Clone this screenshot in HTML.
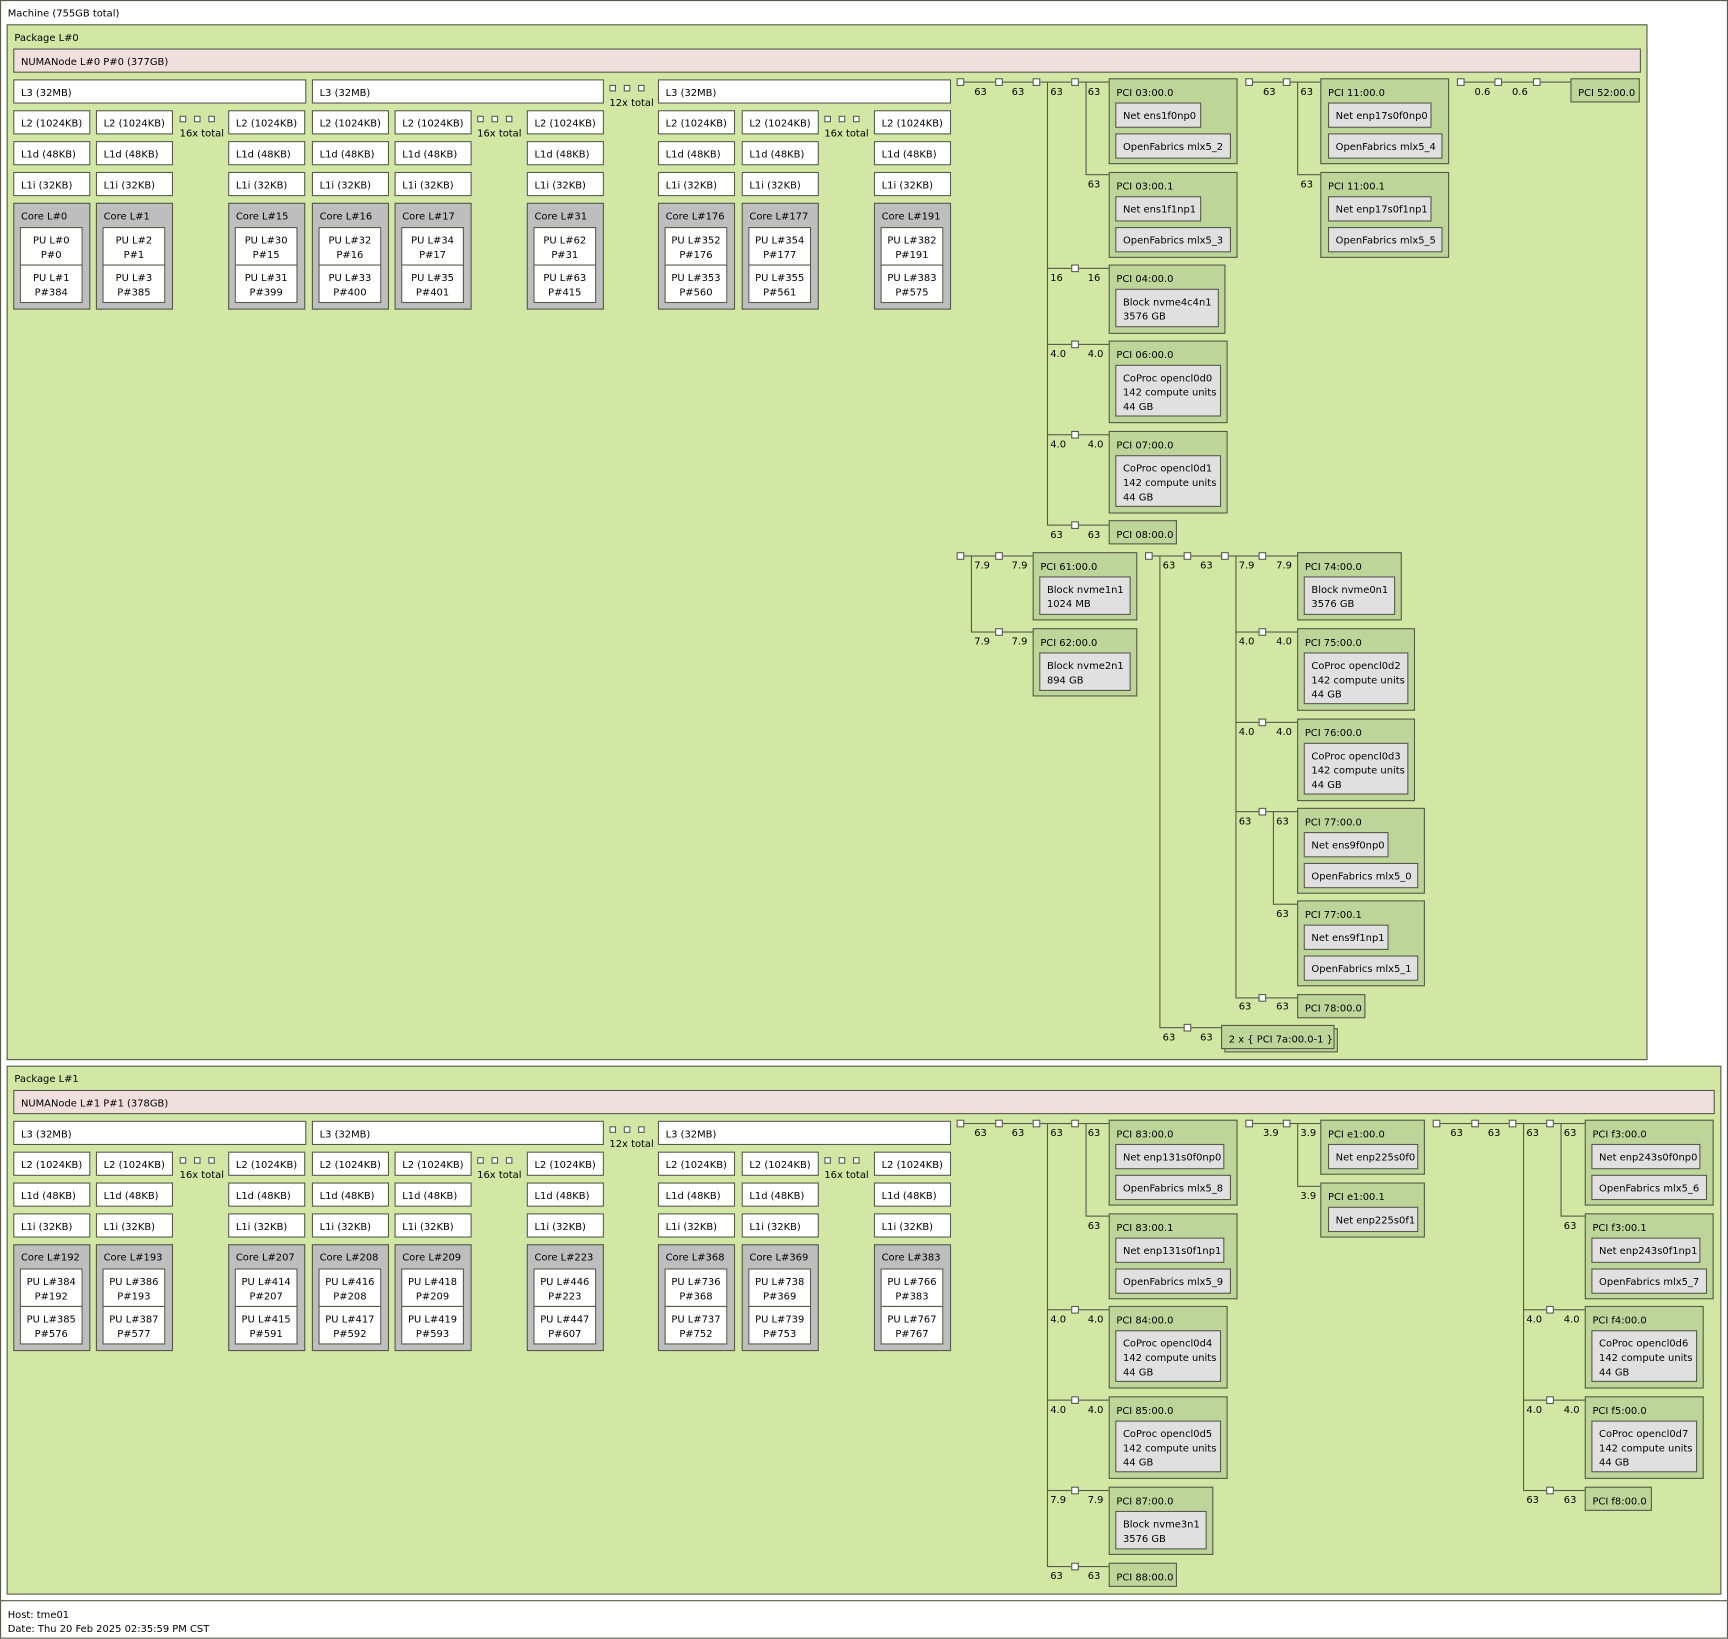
<!DOCTYPE html>
<html><head><meta charset="utf-8"><style>
html,body{margin:0;padding:0;background:#fff;width:1728px;height:1639px;overflow:hidden}
#r{position:absolute;left:0;top:0;width:1568px;height:1487px;transform:scale(1.10204);transform-origin:0 0;font-family:"DejaVu Sans","Liberation Sans",sans-serif;font-size:9px;line-height:13px;color:#000}
.b{position:absolute;box-sizing:border-box;border:1px solid #565a48;padding:6px 0 0 6px;white-space:pre}
.c{background:#fff}.k{background:#bebebe}.p{background:#fff;text-align:center;padding:6px 0 0 0}
.g{background:#bed59a;padding-top:7px}.o{background:#e0e0e0}
.h{position:absolute;height:1px;background:#565a48}.v{position:absolute;width:1px;background:#565a48}
.s{position:absolute;width:7px;height:7px;box-sizing:border-box;border:1px solid #565a48;background:#fff}
.d{position:absolute;width:6px;height:6px;box-sizing:border-box;border:1px solid #565a48;background:#fff}
.t{position:absolute;white-space:pre;margin-top:2px}
</style></head><body><div id="r">
<div class="b c" style="left:0;top:0;width:1568px;height:1453px;padding:6px 0 0 6px">Machine (755GB total)</div>
<div class="b c" style="left:0;top:1452px;width:1568px;height:35px;padding:7px 0 0 6px">Host: tme01
Date: Thu 20 Feb 2025 02:35:59 PM CST</div>

<!-- Package 0 -->
<div class="b" style="left:6px;top:22px;width:1489px;height:940px;background:#d2e7a4;padding-top:6px">Package L#0</div>
<div class="b" style="left:12px;top:44px;width:1477px;height:22px;background:#efdfde">NUMANode L#0 P#0 (377GB)</div>
<div class="b c" style="left:12px;top:72px;width:266px;height:22px">L3 (32MB)</div>
<div class="b c" style="left:283px;top:72px;width:265px;height:22px">L3 (32MB)</div>
<div class="b c" style="left:597px;top:72px;width:266px;height:22px">L3 (32MB)</div>
<div class="d" style="left:553px;top:77px"></div><div class="d" style="left:566px;top:77px"></div><div class="d" style="left:579px;top:77px"></div><div class="t" style="left:553px;top:86px">12x total</div>
<div class="d" style="left:163px;top:105px"></div><div class="d" style="left:176px;top:105px"></div><div class="d" style="left:189px;top:105px"></div><div class="t" style="left:163px;top:114px">16x total</div>
<div class="d" style="left:433px;top:105px"></div><div class="d" style="left:446px;top:105px"></div><div class="d" style="left:459px;top:105px"></div><div class="t" style="left:433px;top:114px">16x total</div>
<div class="d" style="left:748px;top:105px"></div><div class="d" style="left:761px;top:105px"></div><div class="d" style="left:774px;top:105px"></div><div class="t" style="left:748px;top:114px">16x total</div>

<div class="b c" style="left:12px;top:100px;width:70px;height:22px">L2 (1024KB)</div><div class="b c" style="left:12px;top:128px;width:70px;height:22px">L1d (48KB)</div><div class="b c" style="left:12px;top:156px;width:70px;height:22px">L1i (32KB)</div>
<div class="b k" style="left:12px;top:184px;width:70px;height:97px">Core L#0</div><div class="b p" style="left:18px;top:206px;width:57px;height:35px">PU L#0
P#0</div><div class="b p" style="left:18px;top:240px;width:57px;height:35px">PU L#1
P#384</div>
<div class="b c" style="left:87px;top:100px;width:70px;height:22px">L2 (1024KB)</div><div class="b c" style="left:87px;top:128px;width:70px;height:22px">L1d (48KB)</div><div class="b c" style="left:87px;top:156px;width:70px;height:22px">L1i (32KB)</div>
<div class="b k" style="left:87px;top:184px;width:70px;height:97px">Core L#1</div><div class="b p" style="left:93px;top:206px;width:57px;height:35px">PU L#2
P#1</div><div class="b p" style="left:93px;top:240px;width:57px;height:35px">PU L#3
P#385</div>
<div class="b c" style="left:207px;top:100px;width:70px;height:22px">L2 (1024KB)</div><div class="b c" style="left:207px;top:128px;width:70px;height:22px">L1d (48KB)</div><div class="b c" style="left:207px;top:156px;width:70px;height:22px">L1i (32KB)</div>
<div class="b k" style="left:207px;top:184px;width:70px;height:97px">Core L#15</div><div class="b p" style="left:213px;top:206px;width:57px;height:35px">PU L#30
P#15</div><div class="b p" style="left:213px;top:240px;width:57px;height:35px">PU L#31
P#399</div>
<div class="b c" style="left:283px;top:100px;width:70px;height:22px">L2 (1024KB)</div><div class="b c" style="left:283px;top:128px;width:70px;height:22px">L1d (48KB)</div><div class="b c" style="left:283px;top:156px;width:70px;height:22px">L1i (32KB)</div>
<div class="b k" style="left:283px;top:184px;width:70px;height:97px">Core L#16</div><div class="b p" style="left:289px;top:206px;width:57px;height:35px">PU L#32
P#16</div><div class="b p" style="left:289px;top:240px;width:57px;height:35px">PU L#33
P#400</div>
<div class="b c" style="left:358px;top:100px;width:70px;height:22px">L2 (1024KB)</div><div class="b c" style="left:358px;top:128px;width:70px;height:22px">L1d (48KB)</div><div class="b c" style="left:358px;top:156px;width:70px;height:22px">L1i (32KB)</div>
<div class="b k" style="left:358px;top:184px;width:70px;height:97px">Core L#17</div><div class="b p" style="left:364px;top:206px;width:57px;height:35px">PU L#34
P#17</div><div class="b p" style="left:364px;top:240px;width:57px;height:35px">PU L#35
P#401</div>
<div class="b c" style="left:478px;top:100px;width:70px;height:22px">L2 (1024KB)</div><div class="b c" style="left:478px;top:128px;width:70px;height:22px">L1d (48KB)</div><div class="b c" style="left:478px;top:156px;width:70px;height:22px">L1i (32KB)</div>
<div class="b k" style="left:478px;top:184px;width:70px;height:97px">Core L#31</div><div class="b p" style="left:484px;top:206px;width:57px;height:35px">PU L#62
P#31</div><div class="b p" style="left:484px;top:240px;width:57px;height:35px">PU L#63
P#415</div>
<div class="b c" style="left:597px;top:100px;width:70px;height:22px">L2 (1024KB)</div><div class="b c" style="left:597px;top:128px;width:70px;height:22px">L1d (48KB)</div><div class="b c" style="left:597px;top:156px;width:70px;height:22px">L1i (32KB)</div>
<div class="b k" style="left:597px;top:184px;width:70px;height:97px">Core L#176</div><div class="b p" style="left:603px;top:206px;width:57px;height:35px">PU L#352
P#176</div><div class="b p" style="left:603px;top:240px;width:57px;height:35px">PU L#353
P#560</div>
<div class="b c" style="left:673px;top:100px;width:70px;height:22px">L2 (1024KB)</div><div class="b c" style="left:673px;top:128px;width:70px;height:22px">L1d (48KB)</div><div class="b c" style="left:673px;top:156px;width:70px;height:22px">L1i (32KB)</div>
<div class="b k" style="left:673px;top:184px;width:70px;height:97px">Core L#177</div><div class="b p" style="left:679px;top:206px;width:57px;height:35px">PU L#354
P#177</div><div class="b p" style="left:679px;top:240px;width:57px;height:35px">PU L#355
P#561</div>
<div class="b c" style="left:793px;top:100px;width:70px;height:22px">L2 (1024KB)</div><div class="b c" style="left:793px;top:128px;width:70px;height:22px">L1d (48KB)</div><div class="b c" style="left:793px;top:156px;width:70px;height:22px">L1i (32KB)</div>
<div class="b k" style="left:793px;top:184px;width:70px;height:97px">Core L#191</div><div class="b p" style="left:799px;top:206px;width:57px;height:35px">PU L#382
P#191</div><div class="b p" style="left:799px;top:240px;width:57px;height:35px">PU L#383
P#575</div>

<!-- pkg0 tree 1 -->
<div class="h" style="left:871px;top:74px;width:135px"></div>
<div class="v" style="left:950px;top:74px;height:402px"></div>
<div class="v" style="left:985px;top:74px;height:84px"></div>
<div class="h" style="left:985px;top:158px;width:21px"></div>
<div class="h" style="left:950px;top:243px;width:56px"></div>
<div class="h" style="left:950px;top:312px;width:56px"></div>
<div class="h" style="left:950px;top:394px;width:56px"></div>
<div class="h" style="left:950px;top:476px;width:56px"></div>
<div class="s" style="left:868px;top:71px"></div><div class="s" style="left:903px;top:71px"></div><div class="s" style="left:937px;top:71px"></div><div class="s" style="left:972px;top:71px"></div>
<div class="s" style="left:972px;top:240px"></div><div class="s" style="left:972px;top:309px"></div><div class="s" style="left:972px;top:391px"></div><div class="s" style="left:972px;top:473px"></div>
<div class="t" style="left:884px;top:76px">63</div><div class="t" style="left:918px;top:76px">63</div><div class="t" style="left:953px;top:76px">63</div><div class="t" style="left:987px;top:76px">63</div><div class="t" style="left:987px;top:160px">63</div>
<div class="t" style="left:953px;top:245px">16</div><div class="t" style="left:987px;top:245px">16</div>
<div class="t" style="left:953px;top:314px">4.0</div><div class="t" style="left:987px;top:314px">4.0</div>
<div class="t" style="left:953px;top:396px">4.0</div><div class="t" style="left:987px;top:396px">4.0</div>
<div class="t" style="left:953px;top:478px">63</div><div class="t" style="left:987px;top:478px">63</div>
<div class="b g" style="left:1006px;top:71px;width:117px;height:78px">PCI 03:00.0</div>
<div class="b o" style="left:1012px;top:93px;width:78px;height:23px">Net ens1f0np0</div>
<div class="b o" style="left:1012px;top:121px;width:105px;height:23px">OpenFabrics mlx5_2</div>
<div class="b g" style="left:1006px;top:156px;width:117px;height:78px">PCI 03:00.1</div>
<div class="b o" style="left:1012px;top:178px;width:78px;height:23px">Net ens1f1np1</div>
<div class="b o" style="left:1012px;top:206px;width:105px;height:23px">OpenFabrics mlx5_3</div>
<div class="b g" style="left:1006px;top:240px;width:106px;height:63px">PCI 04:00.0</div>
<div class="b o" style="left:1012px;top:262px;width:94px;height:35px">Block nvme4c4n1
3576 GB</div>
<div class="b g" style="left:1006px;top:309px;width:108px;height:75px">PCI 06:00.0</div>
<div class="b o" style="left:1012px;top:331px;width:96px;height:47px">CoProc opencl0d0
142 compute units
44 GB</div>
<div class="b g" style="left:1006px;top:391px;width:108px;height:75px">PCI 07:00.0</div>
<div class="b o" style="left:1012px;top:413px;width:96px;height:47px">CoProc opencl0d1
142 compute units
44 GB</div>
<div class="b g" style="left:1006px;top:472px;width:62px;height:22px">PCI 08:00.0</div>

<!-- pkg0 tree 2 -->
<div class="h" style="left:1133px;top:74px;width:65px"></div>
<div class="v" style="left:1177px;top:74px;height:84px"></div>
<div class="h" style="left:1177px;top:158px;width:21px"></div>
<div class="s" style="left:1130px;top:71px"></div><div class="s" style="left:1164px;top:71px"></div>
<div class="t" style="left:1146px;top:76px">63</div><div class="t" style="left:1180px;top:76px">63</div><div class="t" style="left:1180px;top:160px">63</div>
<div class="b g" style="left:1198px;top:71px;width:117px;height:78px">PCI 11:00.0</div>
<div class="b o" style="left:1205px;top:93px;width:94px;height:23px">Net enp17s0f0np0</div>
<div class="b o" style="left:1205px;top:121px;width:104px;height:23px">OpenFabrics mlx5_4</div>
<div class="b g" style="left:1198px;top:156px;width:117px;height:78px">PCI 11:00.1</div>
<div class="b o" style="left:1205px;top:178px;width:94px;height:23px">Net enp17s0f1np1</div>
<div class="b o" style="left:1205px;top:206px;width:104px;height:23px">OpenFabrics mlx5_5</div>

<!-- pkg0 tree 3 -->
<div class="h" style="left:1325px;top:74px;width:100px"></div>
<div class="s" style="left:1322px;top:71px"></div><div class="s" style="left:1356px;top:71px"></div><div class="s" style="left:1391px;top:71px"></div>
<div class="t" style="left:1338px;top:76px">0.6</div><div class="t" style="left:1372px;top:76px">0.6</div>
<div class="b g" style="left:1425px;top:71px;width:63px;height:22px">PCI 52:00.0</div>

<!-- pkg0 tree 4 -->
<div class="h" style="left:871px;top:504px;width:66px"></div>
<div class="v" style="left:881px;top:504px;height:69px"></div>
<div class="h" style="left:881px;top:573px;width:56px"></div>
<div class="s" style="left:868px;top:501px"></div><div class="s" style="left:903px;top:501px"></div><div class="s" style="left:903px;top:570px"></div>
<div class="t" style="left:884px;top:506px">7.9</div><div class="t" style="left:918px;top:506px">7.9</div><div class="t" style="left:884px;top:575px">7.9</div><div class="t" style="left:918px;top:575px">7.9</div>
<div class="b g" style="left:937px;top:501px;width:95px;height:62px">PCI 61:00.0</div>
<div class="b o" style="left:943px;top:523px;width:83px;height:35px">Block nvme1n1
1024 MB</div>
<div class="b g" style="left:937px;top:570px;width:95px;height:62px">PCI 62:00.0</div>
<div class="b o" style="left:943px;top:592px;width:83px;height:35px">Block nvme2n1
894 GB</div>

<!-- pkg0 tree 5 -->
<div class="h" style="left:1042px;top:504px;width:135px"></div>
<div class="v" style="left:1052px;top:504px;height:428px"></div>
<div class="v" style="left:1121px;top:504px;height:401px"></div>
<div class="h" style="left:1121px;top:573px;width:56px"></div>
<div class="h" style="left:1121px;top:655px;width:56px"></div>
<div class="h" style="left:1121px;top:736px;width:56px"></div>
<div class="v" style="left:1155px;top:736px;height:84px"></div>
<div class="h" style="left:1155px;top:820px;width:22px"></div>
<div class="h" style="left:1121px;top:905px;width:56px"></div>
<div class="h" style="left:1052px;top:932px;width:56px"></div>
<div class="s" style="left:1039px;top:501px"></div><div class="s" style="left:1074px;top:501px"></div><div class="s" style="left:1108px;top:501px"></div><div class="s" style="left:1142px;top:501px"></div>
<div class="s" style="left:1142px;top:570px"></div><div class="s" style="left:1142px;top:652px"></div><div class="s" style="left:1142px;top:733px"></div><div class="s" style="left:1142px;top:902px"></div><div class="s" style="left:1074px;top:929px"></div>
<div class="t" style="left:1055px;top:506px">63</div><div class="t" style="left:1089px;top:506px">63</div><div class="t" style="left:1124px;top:506px">7.9</div><div class="t" style="left:1158px;top:506px">7.9</div>
<div class="t" style="left:1124px;top:575px">4.0</div><div class="t" style="left:1158px;top:575px">4.0</div>
<div class="t" style="left:1124px;top:657px">4.0</div><div class="t" style="left:1158px;top:657px">4.0</div>
<div class="t" style="left:1124px;top:738px">63</div><div class="t" style="left:1158px;top:738px">63</div><div class="t" style="left:1158px;top:822px">63</div>
<div class="t" style="left:1124px;top:906px">63</div><div class="t" style="left:1158px;top:906px">63</div>
<div class="t" style="left:1055px;top:934px">63</div><div class="t" style="left:1089px;top:934px">63</div>
<div class="b g" style="left:1177px;top:501px;width:95px;height:62px">PCI 74:00.0</div>
<div class="b o" style="left:1183px;top:523px;width:83px;height:35px">Block nvme0n1
3576 GB</div>
<div class="b g" style="left:1177px;top:570px;width:107px;height:75px">PCI 75:00.0</div>
<div class="b o" style="left:1183px;top:592px;width:95px;height:47px">CoProc opencl0d2
142 compute units
44 GB</div>
<div class="b g" style="left:1177px;top:652px;width:107px;height:75px">PCI 76:00.0</div>
<div class="b o" style="left:1183px;top:674px;width:95px;height:47px">CoProc opencl0d3
142 compute units
44 GB</div>
<div class="b g" style="left:1177px;top:733px;width:116px;height:78px">PCI 77:00.0</div>
<div class="b o" style="left:1183px;top:755px;width:77px;height:23px">Net ens9f0np0</div>
<div class="b o" style="left:1183px;top:783px;width:104px;height:23px">OpenFabrics mlx5_0</div>
<div class="b g" style="left:1177px;top:817px;width:116px;height:78px">PCI 77:00.1</div>
<div class="b o" style="left:1183px;top:839px;width:77px;height:23px">Net ens9f1np1</div>
<div class="b o" style="left:1183px;top:867px;width:104px;height:23px">OpenFabrics mlx5_1</div>
<div class="b g" style="left:1177px;top:902px;width:62px;height:22px">PCI 78:00.0</div>
<div class="b g" style="left:1111px;top:933px;width:103px;height:22px"></div>
<div class="b g" style="left:1108px;top:930px;width:103px;height:22px">2 x { PCI 7a:00.0-1 }</div>

<!-- Package 1 -->
<div class="b" style="left:6px;top:967px;width:1556px;height:480px;background:#d2e7a4;padding-top:6px">Package L#1</div>
<div class="b" style="left:12px;top:989px;width:1544px;height:22px;background:#efdfde">NUMANode L#1 P#1 (378GB)</div>
<div class="b c" style="left:12px;top:1017px;width:266px;height:22px">L3 (32MB)</div>
<div class="b c" style="left:283px;top:1017px;width:265px;height:22px">L3 (32MB)</div>
<div class="b c" style="left:597px;top:1017px;width:266px;height:22px">L3 (32MB)</div>
<div class="d" style="left:553px;top:1022px"></div><div class="d" style="left:566px;top:1022px"></div><div class="d" style="left:579px;top:1022px"></div><div class="t" style="left:553px;top:1031px">12x total</div>
<div class="d" style="left:163px;top:1050px"></div><div class="d" style="left:176px;top:1050px"></div><div class="d" style="left:189px;top:1050px"></div><div class="t" style="left:163px;top:1059px">16x total</div>
<div class="d" style="left:433px;top:1050px"></div><div class="d" style="left:446px;top:1050px"></div><div class="d" style="left:459px;top:1050px"></div><div class="t" style="left:433px;top:1059px">16x total</div>
<div class="d" style="left:748px;top:1050px"></div><div class="d" style="left:761px;top:1050px"></div><div class="d" style="left:774px;top:1050px"></div><div class="t" style="left:748px;top:1059px">16x total</div>

<div class="b c" style="left:12px;top:1045px;width:70px;height:22px">L2 (1024KB)</div><div class="b c" style="left:12px;top:1073px;width:70px;height:22px">L1d (48KB)</div><div class="b c" style="left:12px;top:1101px;width:70px;height:22px">L1i (32KB)</div>
<div class="b k" style="left:12px;top:1129px;width:70px;height:97px">Core L#192</div><div class="b p" style="left:18px;top:1151px;width:57px;height:35px">PU L#384
P#192</div><div class="b p" style="left:18px;top:1185px;width:57px;height:35px">PU L#385
P#576</div>
<div class="b c" style="left:87px;top:1045px;width:70px;height:22px">L2 (1024KB)</div><div class="b c" style="left:87px;top:1073px;width:70px;height:22px">L1d (48KB)</div><div class="b c" style="left:87px;top:1101px;width:70px;height:22px">L1i (32KB)</div>
<div class="b k" style="left:87px;top:1129px;width:70px;height:97px">Core L#193</div><div class="b p" style="left:93px;top:1151px;width:57px;height:35px">PU L#386
P#193</div><div class="b p" style="left:93px;top:1185px;width:57px;height:35px">PU L#387
P#577</div>
<div class="b c" style="left:207px;top:1045px;width:70px;height:22px">L2 (1024KB)</div><div class="b c" style="left:207px;top:1073px;width:70px;height:22px">L1d (48KB)</div><div class="b c" style="left:207px;top:1101px;width:70px;height:22px">L1i (32KB)</div>
<div class="b k" style="left:207px;top:1129px;width:70px;height:97px">Core L#207</div><div class="b p" style="left:213px;top:1151px;width:57px;height:35px">PU L#414
P#207</div><div class="b p" style="left:213px;top:1185px;width:57px;height:35px">PU L#415
P#591</div>
<div class="b c" style="left:283px;top:1045px;width:70px;height:22px">L2 (1024KB)</div><div class="b c" style="left:283px;top:1073px;width:70px;height:22px">L1d (48KB)</div><div class="b c" style="left:283px;top:1101px;width:70px;height:22px">L1i (32KB)</div>
<div class="b k" style="left:283px;top:1129px;width:70px;height:97px">Core L#208</div><div class="b p" style="left:289px;top:1151px;width:57px;height:35px">PU L#416
P#208</div><div class="b p" style="left:289px;top:1185px;width:57px;height:35px">PU L#417
P#592</div>
<div class="b c" style="left:358px;top:1045px;width:70px;height:22px">L2 (1024KB)</div><div class="b c" style="left:358px;top:1073px;width:70px;height:22px">L1d (48KB)</div><div class="b c" style="left:358px;top:1101px;width:70px;height:22px">L1i (32KB)</div>
<div class="b k" style="left:358px;top:1129px;width:70px;height:97px">Core L#209</div><div class="b p" style="left:364px;top:1151px;width:57px;height:35px">PU L#418
P#209</div><div class="b p" style="left:364px;top:1185px;width:57px;height:35px">PU L#419
P#593</div>
<div class="b c" style="left:478px;top:1045px;width:70px;height:22px">L2 (1024KB)</div><div class="b c" style="left:478px;top:1073px;width:70px;height:22px">L1d (48KB)</div><div class="b c" style="left:478px;top:1101px;width:70px;height:22px">L1i (32KB)</div>
<div class="b k" style="left:478px;top:1129px;width:70px;height:97px">Core L#223</div><div class="b p" style="left:484px;top:1151px;width:57px;height:35px">PU L#446
P#223</div><div class="b p" style="left:484px;top:1185px;width:57px;height:35px">PU L#447
P#607</div>
<div class="b c" style="left:597px;top:1045px;width:70px;height:22px">L2 (1024KB)</div><div class="b c" style="left:597px;top:1073px;width:70px;height:22px">L1d (48KB)</div><div class="b c" style="left:597px;top:1101px;width:70px;height:22px">L1i (32KB)</div>
<div class="b k" style="left:597px;top:1129px;width:70px;height:97px">Core L#368</div><div class="b p" style="left:603px;top:1151px;width:57px;height:35px">PU L#736
P#368</div><div class="b p" style="left:603px;top:1185px;width:57px;height:35px">PU L#737
P#752</div>
<div class="b c" style="left:673px;top:1045px;width:70px;height:22px">L2 (1024KB)</div><div class="b c" style="left:673px;top:1073px;width:70px;height:22px">L1d (48KB)</div><div class="b c" style="left:673px;top:1101px;width:70px;height:22px">L1i (32KB)</div>
<div class="b k" style="left:673px;top:1129px;width:70px;height:97px">Core L#369</div><div class="b p" style="left:679px;top:1151px;width:57px;height:35px">PU L#738
P#369</div><div class="b p" style="left:679px;top:1185px;width:57px;height:35px">PU L#739
P#753</div>
<div class="b c" style="left:793px;top:1045px;width:70px;height:22px">L2 (1024KB)</div><div class="b c" style="left:793px;top:1073px;width:70px;height:22px">L1d (48KB)</div><div class="b c" style="left:793px;top:1101px;width:70px;height:22px">L1i (32KB)</div>
<div class="b k" style="left:793px;top:1129px;width:70px;height:97px">Core L#383</div><div class="b p" style="left:799px;top:1151px;width:57px;height:35px">PU L#766
P#383</div><div class="b p" style="left:799px;top:1185px;width:57px;height:35px">PU L#767
P#767</div>

<!-- pkg1 tree 1 -->
<div class="h" style="left:871px;top:1019px;width:135px"></div>
<div class="v" style="left:950px;top:1019px;height:402px"></div>
<div class="v" style="left:985px;top:1019px;height:84px"></div>
<div class="h" style="left:985px;top:1103px;width:21px"></div>
<div class="h" style="left:950px;top:1188px;width:56px"></div>
<div class="h" style="left:950px;top:1270px;width:56px"></div>
<div class="h" style="left:950px;top:1352px;width:56px"></div>
<div class="h" style="left:950px;top:1421px;width:56px"></div>
<div class="s" style="left:868px;top:1016px"></div><div class="s" style="left:903px;top:1016px"></div><div class="s" style="left:937px;top:1016px"></div><div class="s" style="left:972px;top:1016px"></div>
<div class="s" style="left:972px;top:1185px"></div><div class="s" style="left:972px;top:1267px"></div><div class="s" style="left:972px;top:1349px"></div><div class="s" style="left:972px;top:1418px"></div>
<div class="t" style="left:884px;top:1021px">63</div><div class="t" style="left:918px;top:1021px">63</div><div class="t" style="left:953px;top:1021px">63</div><div class="t" style="left:987px;top:1021px">63</div><div class="t" style="left:987px;top:1105px">63</div>
<div class="t" style="left:953px;top:1190px">4.0</div><div class="t" style="left:987px;top:1190px">4.0</div>
<div class="t" style="left:953px;top:1272px">4.0</div><div class="t" style="left:987px;top:1272px">4.0</div>
<div class="t" style="left:953px;top:1354px">7.9</div><div class="t" style="left:987px;top:1354px">7.9</div>
<div class="t" style="left:953px;top:1423px">63</div><div class="t" style="left:987px;top:1423px">63</div>
<div class="b g" style="left:1006px;top:1016px;width:117px;height:78px">PCI 83:00.0</div>
<div class="b o" style="left:1012px;top:1038px;width:99px;height:23px">Net enp131s0f0np0</div>
<div class="b o" style="left:1012px;top:1066px;width:105px;height:23px">OpenFabrics mlx5_8</div>
<div class="b g" style="left:1006px;top:1101px;width:117px;height:78px">PCI 83:00.1</div>
<div class="b o" style="left:1012px;top:1123px;width:99px;height:23px">Net enp131s0f1np1</div>
<div class="b o" style="left:1012px;top:1151px;width:105px;height:23px">OpenFabrics mlx5_9</div>
<div class="b g" style="left:1006px;top:1185px;width:108px;height:75px">PCI 84:00.0</div>
<div class="b o" style="left:1012px;top:1207px;width:96px;height:47px">CoProc opencl0d4
142 compute units
44 GB</div>
<div class="b g" style="left:1006px;top:1267px;width:108px;height:75px">PCI 85:00.0</div>
<div class="b o" style="left:1012px;top:1289px;width:96px;height:47px">CoProc opencl0d5
142 compute units
44 GB</div>
<div class="b g" style="left:1006px;top:1349px;width:95px;height:62px">PCI 87:00.0</div>
<div class="b o" style="left:1012px;top:1371px;width:83px;height:35px">Block nvme3n1
3576 GB</div>
<div class="b g" style="left:1006px;top:1418px;width:62px;height:22px">PCI 88:00.0</div>

<!-- pkg1 tree 2 -->
<div class="h" style="left:1133px;top:1019px;width:65px"></div>
<div class="v" style="left:1177px;top:1019px;height:57px"></div>
<div class="h" style="left:1177px;top:1076px;width:21px"></div>
<div class="s" style="left:1130px;top:1016px"></div><div class="s" style="left:1164px;top:1016px"></div>
<div class="t" style="left:1146px;top:1021px">3.9</div><div class="t" style="left:1180px;top:1021px">3.9</div><div class="t" style="left:1180px;top:1078px">3.9</div>
<div class="b g" style="left:1198px;top:1016px;width:95px;height:50px">PCI e1:00.0</div>
<div class="b o" style="left:1205px;top:1038px;width:82px;height:23px">Net enp225s0f0</div>
<div class="b g" style="left:1198px;top:1073px;width:95px;height:50px">PCI e1:00.1</div>
<div class="b o" style="left:1205px;top:1095px;width:82px;height:23px">Net enp225s0f1</div>

<!-- pkg1 tree 3 -->
<div class="h" style="left:1303px;top:1019px;width:135px"></div>
<div class="v" style="left:1382px;top:1019px;height:333px"></div>
<div class="v" style="left:1416px;top:1019px;height:84px"></div>
<div class="h" style="left:1416px;top:1103px;width:22px"></div>
<div class="h" style="left:1382px;top:1188px;width:56px"></div>
<div class="h" style="left:1382px;top:1270px;width:56px"></div>
<div class="h" style="left:1382px;top:1352px;width:56px"></div>
<div class="s" style="left:1300px;top:1016px"></div><div class="s" style="left:1335px;top:1016px"></div><div class="s" style="left:1369px;top:1016px"></div><div class="s" style="left:1403px;top:1016px"></div>
<div class="s" style="left:1403px;top:1185px"></div><div class="s" style="left:1403px;top:1267px"></div><div class="s" style="left:1403px;top:1349px"></div>
<div class="t" style="left:1316px;top:1021px">63</div><div class="t" style="left:1350px;top:1021px">63</div><div class="t" style="left:1385px;top:1021px">63</div><div class="t" style="left:1419px;top:1021px">63</div><div class="t" style="left:1419px;top:1105px">63</div>
<div class="t" style="left:1385px;top:1190px">4.0</div><div class="t" style="left:1419px;top:1190px">4.0</div>
<div class="t" style="left:1385px;top:1272px">4.0</div><div class="t" style="left:1419px;top:1272px">4.0</div>
<div class="t" style="left:1385px;top:1354px">63</div><div class="t" style="left:1419px;top:1354px">63</div>
<div class="b g" style="left:1438px;top:1016px;width:117px;height:78px">PCI f3:00.0</div>
<div class="b o" style="left:1444px;top:1038px;width:99px;height:23px">Net enp243s0f0np0</div>
<div class="b o" style="left:1444px;top:1066px;width:105px;height:23px">OpenFabrics mlx5_6</div>
<div class="b g" style="left:1438px;top:1101px;width:117px;height:78px">PCI f3:00.1</div>
<div class="b o" style="left:1444px;top:1123px;width:99px;height:23px">Net enp243s0f1np1</div>
<div class="b o" style="left:1444px;top:1151px;width:105px;height:23px">OpenFabrics mlx5_7</div>
<div class="b g" style="left:1438px;top:1185px;width:108px;height:75px">PCI f4:00.0</div>
<div class="b o" style="left:1444px;top:1207px;width:96px;height:47px">CoProc opencl0d6
142 compute units
44 GB</div>
<div class="b g" style="left:1438px;top:1267px;width:108px;height:75px">PCI f5:00.0</div>
<div class="b o" style="left:1444px;top:1289px;width:96px;height:47px">CoProc opencl0d7
142 compute units
44 GB</div>
<div class="b g" style="left:1438px;top:1349px;width:61px;height:22px">PCI f8:00.0</div>
</div></body></html>
